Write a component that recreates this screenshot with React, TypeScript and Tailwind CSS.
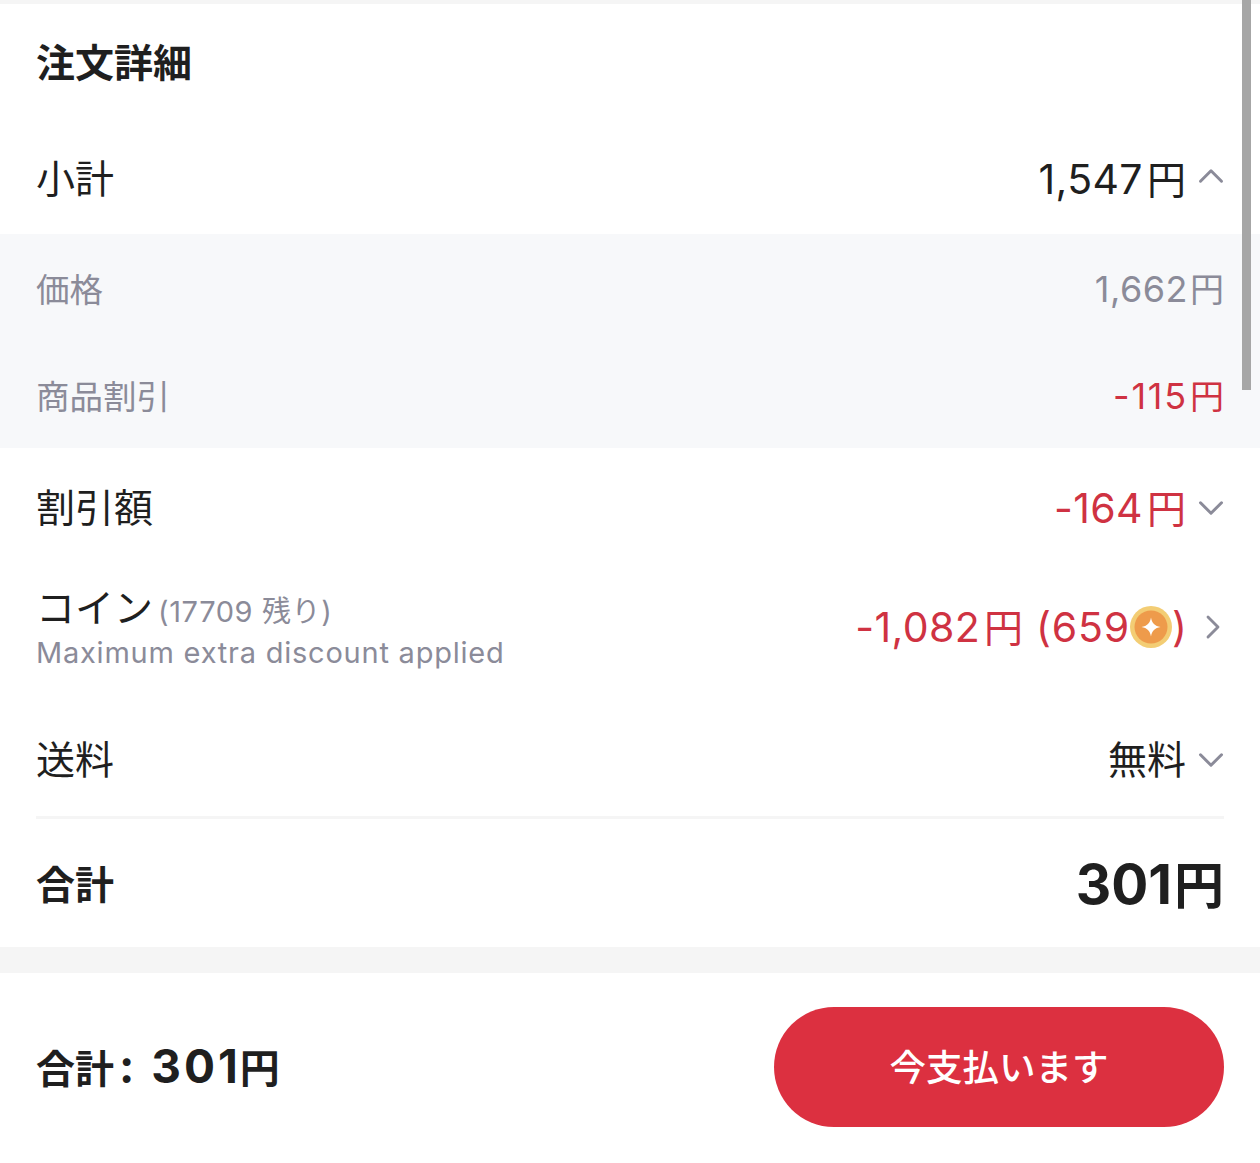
import { ChevronDown, ChevronRight, ChevronUp } from "lucide-react";

const FONT = "font-['Inter','Noto_Sans_CJK_JP',sans-serif]";

const Chevron = ({ dir }: { dir: "up" | "down" | "right" }) => {
  if (dir === "right") {
    return <ChevronRight className="w-[40px] h-[40px] text-[#8b8b99] ml-[5.5px] -mr-[8.5px]" strokeWidth={1.7} />;
  }
  if (dir === "up") {
    return <ChevronUp className="w-[42px] h-[42px] text-[#8b8b99] ml-[3.5px] -mr-[7.5px] -mt-[6px]" strokeWidth={1.7} />;
  }
  return <ChevronDown className="w-[42px] h-[42px] text-[#8b8b99] ml-[3.5px] -mr-[7.5px] -mt-[1px]" strokeWidth={1.7} />;
};

// numbers sit a little larger than the kana/kanji next to them
const Yen = ({ n }: { n: string }) => (
  <span className="flex items-baseline">
    <span className="text-[41px] tracking-[0.4px]">{n}</span>
    <span className="text-[39px] ml-[4px]">円</span>
  </span>
);

const Row = ({
  label,
  children,
  dir,
  red,
  className,
}: {
  label: string;
  children: React.ReactNode;
  dir: "up" | "down";
  red?: boolean;
  className: string;
}) => (
  <div className={`flex items-center justify-between text-[39px] leading-[46px] ${className}`}>
    <span className="text-[#1f1f1f]">{label}</span>
    <span className={`flex items-center ${red ? "text-[#cf3242]" : "text-[#1f1f1f]"}`}>
      {children}
      <Chevron dir={dir} />
    </span>
  </div>
);

const SubRow = ({ label, value, red }: { label: string; value: string; red?: boolean }) => (
  <div className="h-[107px] pt-[4px] flex items-center justify-between text-[33.5px] leading-[40px] text-[#8b8b99]">
    <span>{label}</span>
    <span className={`flex items-baseline ${red ? "text-[#cf3242]" : ""}`}>
      <span className={`text-[36px] ${red ? "tracking-[1.8px]" : "tracking-[0.5px]"}`}>{value}</span>
      <span className="text-[34px] ml-[2px]">円</span>
    </span>
  </div>
);

const Coin = () => (
  <svg viewBox="0 0 42 42" className="w-[42px] h-[42px] shrink-0">
    <circle cx="21" cy="21" r="21" fill="#f3cd74" />
    <circle cx="21" cy="21" r="16.5" fill="#ee9b4b" />
    <path d="M21 11.5c.9 5.6 3.9 8.6 9.5 9.5-5.6.9-8.6 3.9-9.5 9.5-.9-5.6-3.9-8.6-9.5-9.5 5.6-.9 8.6-3.9 9.5-9.5z" fill="#fff" />
  </svg>
);

export default function App() {
  return (
    <div className={`relative w-[1260px] h-[1163px] overflow-hidden bg-white flex flex-col ${FONT}`}>
      <div className="h-[4px] bg-[#f5f5f5]" />

      <div className="h-[120px] pb-[3px] px-[36px] flex items-center">
        <h1 className="text-[39px] leading-[46px] font-bold text-[#1f1f1f]">注文詳細</h1>
      </div>

      <Row label="小計" dir="up" className="h-[110px] px-[36px]">
        <Yen n="1,547" />
      </Row>

      <div className="bg-[#f7f8fa] h-[214px] px-[36px]">
        <SubRow label="価格" value="1,662" />
        <SubRow label="商品割引" value="-115" red />
      </div>

      <Row label="割引額" dir="down" red className="h-[120px] px-[36px]">
        <Yen n="-164" />
      </Row>

      <div className="h-[118px] px-[36px] flex items-center justify-between">
        <div className="flex flex-col pt-[1px]">
          <div className="flex items-baseline">
            <span className="text-[39px] leading-[46px] text-[#1f1f1f]">コイン</span>
            <span className="text-[29px] leading-[36px] tracking-[0.6px] text-[#8b8b99] ml-[5px]">(17709 残り)</span>
          </div>
          <span className="text-[29px] leading-[36px] mt-[4px] tracking-[0.77px] text-[#8b8b99]">Maximum extra discount applied</span>
        </div>
        <span className="flex items-center text-[41px] leading-[46px] text-[#cf3242]">
          <Yen n="-1,082" />
          <span className="ml-[13px] tracking-[0.8px]">(659</span>
          <Coin />
          <span>)</span>
          <Chevron dir="right" />
        </span>
      </div>

      <Row label="送料" dir="down" className="h-[133px] pt-[18px] mx-[36px] border-b-[3px] border-[#f5f5f5]">
        <span className="text-[39px]">無料</span>
      </Row>

      <div className="h-[128px] pt-[4px] px-[36px] flex items-center justify-between font-bold text-[#1f1f1f]">
        <span className="text-[39px] leading-[46px]">合計</span>
        <span className="flex items-baseline leading-[60px]">
          <span className="text-[55px]">301</span>
          <span className="text-[50px] ml-[2px]">円</span>
        </span>
      </div>

      <div className="h-[26px] bg-[#f5f5f5]" />

      <div className="flex-1 px-[36px] pb-[2px] flex items-center justify-between">
        <span className="flex items-baseline leading-[48px] font-bold text-[#1f1f1f]">
          <span className="text-[39px]">合計</span>
          <span className="text-[46px] tracking-[3px] whitespace-pre ml-[5px]">: 301</span>
          <span className="text-[40px] -ml-[1px]">円</span>
        </span>
        <button className="w-[450px] h-[120px] pt-[2px] rounded-[60px] bg-[#dc3040] text-white text-[36.5px] leading-[44px] font-medium">
          今支払います
        </button>
      </div>

      <div className="absolute right-[9px] top-0 w-[9px] h-[390px] bg-[#a6a6a6]" />
    </div>
  );
}
